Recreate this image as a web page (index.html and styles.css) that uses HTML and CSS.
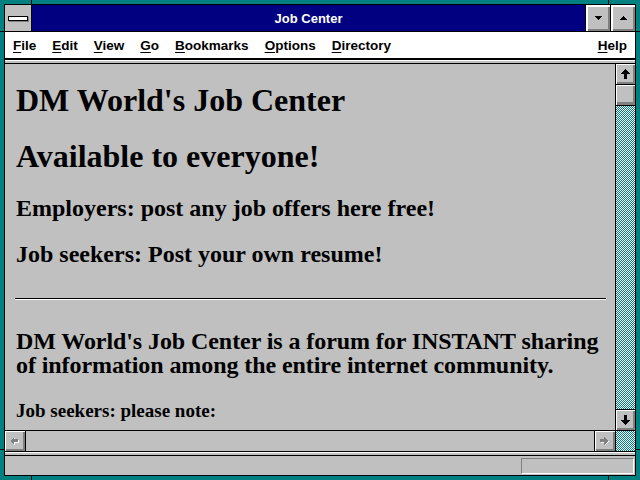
FILE: index.html
```html
<!DOCTYPE html>
<html>
<head>
<meta charset="utf-8">
<title>Job Center</title>
<link rel="stylesheet" href="styles.css">
</head>
<body>
<div class="win">
  <div class="frame">
    <div class="titlebar">
      <div class="sysbox"><div class="sysbar"></div></div>
      <div class="title">Job Center</div>
      <div class="tbtn"><svg width="7" height="4" viewBox="0 0 7 4" shape-rendering="crispEdges"><polygon points="0,0 7,0 3.5,4" fill="#000"/></svg></div>
      <div class="tbtn"><svg width="7" height="4" viewBox="0 0 7 4" shape-rendering="crispEdges"><polygon points="0,4 7,4 3.5,0" fill="#000"/></svg></div>
    </div>
    <div class="menubar">
      <span class="mi"><u>F</u>ile</span>
      <span class="mi"><u>E</u>dit</span>
      <span class="mi"><u>V</u>iew</span>
      <span class="mi"><u>G</u>o</span>
      <span class="mi"><u>B</u>ookmarks</span>
      <span class="mi"><u>O</u>ptions</span>
      <span class="mi"><u>D</u>irectory</span>
      <span class="spacer"></span>
      <span class="mi"><u>H</u>elp</span>
    </div>
    <div class="sep"></div>
    <div class="main">
      <div class="content">
        <h1 class="h1 first">DM World's Job Center</h1>
        <h1 class="h1 second">Available to everyone!</h1>
        <h2 class="h2 third">Employers: post any job offers here free!</h2>
        <h2 class="h2 fourth">Job seekers: Post your own resume!</h2>
        <div class="rule"></div>
        <p class="lead">DM World's Job Center is a forum for INSTANT sharing of information among the entire internet community.</p>
        <p class="note">Job seekers: please note:</p>
      </div>
      <div class="vscroll">
        <div class="sbtn up"><svg width="9" height="10" viewBox="0 0 9 10" shape-rendering="crispEdges"><polygon points="4.5,0 9,5 6,5 6,10 3,10 3,5 0,5" fill="#000"/></svg></div>
        <div class="thumb"></div>
        <div class="track"></div>
        <div class="sbtn down"><svg width="9" height="10" viewBox="0 0 9 10" shape-rendering="crispEdges"><polygon points="4.5,10 9,5 6,5 6,0 3,0 3,5 0,5" fill="#000"/></svg></div>
      </div>
    </div>
    <div class="hscroll">
      <div class="hbtn left"><svg width="10" height="9" viewBox="0 0 10 9" shape-rendering="crispEdges"><polygon points="1,4.5 5,0.5 5,3 9,3 9,6 5,6 5,8.5" fill="#fff"/><polygon points="0,4 4,0 4,2 8,2 8,5 4,5 4,8" fill="#808080"/></svg></div>
      <div class="htrack"></div>
      <div class="hbtn right"><svg width="10" height="9" viewBox="0 0 10 9" shape-rendering="crispEdges"><polygon points="9,4.5 5,0.5 5,3 1,3 1,6 5,6 5,8.5" fill="#fff"/><polygon points="8,4 4,0 4,2 0,2 0,5 4,5 4,8" fill="#808080"/></svg></div>
      <div class="corner"></div>
    </div>
    <div class="sep2"></div>
    <div class="status"><div class="statbox"></div></div>
  </div>
  <div class="notch nt1"></div>
  <div class="notch nt2"></div>
  <div class="notch nb1"></div>
  <div class="notch nb2"></div>
  <div class="notch nl1"></div>
  <div class="notch nl2"></div>
  <div class="notch nr1"></div>
  <div class="notch nr2"></div>
</div>
</body>
</html>
```
FILE: styles.css
```css
html, body {
  margin: 0;
  padding: 0;
  background: #008080;
  font-family: "Liberation Sans", Arial, sans-serif;
}
.win {
  position: relative;
  width: 640px;
  height: 480px;
  padding: 4px;
  box-sizing: border-box;
  background: #008080;
}
.frame {
  width: 632px;
  height: 472px;
  border: 1px solid #000;
  box-sizing: border-box;
  display: flex;
  flex-direction: column;
  background: #c0c0c0;
}
.titlebar {
  display: flex;
  height: 27px;
  flex: none;
  border-bottom: 1px solid #000;
  box-sizing: border-box;
}
.sysbox {
  width: 27px;
  border-right: 1px solid #000;
  box-sizing: border-box;
  background: #c0c0c0;
  display: flex;
  align-items: center;
  justify-content: center;
}
.sysbar {
  width: 18px;
  height: 3px;
  background: #fff;
  border: 1px solid #000;
  box-shadow: 1px 1px 0 #808080;
  margin-top: 1px;
}
.title {
  flex: 1;
  background: #000080;
  color: #fff;
  font-weight: bold;
  font-size: 13px;
  display: flex;
  align-items: center;
  justify-content: center;
}
.tbtn {
  width: 25px;
  border-left: 1px solid #000;
  box-sizing: border-box;
  background: #c0c0c0;
  box-shadow: inset 1px 1px #fff, inset 2px 2px #fff, inset -1px -1px #808080, inset -2px -2px #808080;
  display: flex;
  align-items: center;
  justify-content: center;
}
.menubar {
  height: 26px;
  flex: none;
  background: #fff;
  border-bottom: 2px solid #000;
  display: flex;
  align-items: center;
  font-weight: bold;
  font-size: 13.5px;
  color: #000;
}
.mi {
  padding: 0 8px;
}
.mi u {
  text-underline-offset: 2px;
}
.spacer {
  flex: 1;
}
.sep {
  height: 2px;
  flex: none;
  background: #c0c0c0;
  border-top: 1px solid #fff;
  border-bottom: 1px solid #000;
}
.main {
  display: flex;
  height: 366px;
  flex: none;
}
.content {
  flex: 1;
  overflow: hidden;
  padding-left: 11px;
  font-family: "Liberation Serif", "Times New Roman", serif;
  font-weight: bold;
  color: #000;
}
.h1 {
  font-size: 32px;
  line-height: 32px;
  margin: 0;
}
.first { margin-top: 20px; }
.second { margin-top: 24px; }
.h2 {
  font-size: 24px;
  line-height: 26px;
  margin: 0;
}
.third { margin-top: 23px; }
.fourth { margin-top: 20px; }
.rule {
  margin: 31px 9px 0 -1px;
  height: 1px;
  background: #000;
  border-bottom: 1px solid #fff;
}
.lead {
  font-size: 24px;
  line-height: 24px;
  letter-spacing: -0.08px;
  margin: 29px 0 0 0;
}
.note {
  font-size: 19px;
  line-height: 20px;
  margin: 24px 0 0 0;
}
.vscroll {
  width: 20px;
  border-left: 1px solid #000;
  box-sizing: border-box;
  display: flex;
  flex-direction: column;
  background: repeating-conic-gradient(#008080 0 25%, #ffffff 0 50%) 0 0 / 2px 2px;
}
.sbtn {
  height: 21px;
  flex: none;
  background: #c0c0c0;
  box-shadow: inset 1px 1px #fff, inset -1px -1px #808080, inset -2px -2px #808080;
  display: flex;
  align-items: center;
  justify-content: center;
  box-sizing: border-box;
}
.up { border-bottom: 1px solid #000; }
.down { border-top: 1px solid #000; }
.thumb {
  height: 21px;
  flex: none;
  box-sizing: border-box;
  background: #c0c0c0;
  border-bottom: 1px solid #000;
  box-shadow: inset 1px 1px #fff, inset -1px -2px #808080, inset -2px -3px #808080;
}
.track { flex: 1; }
.hscroll {
  height: 21px;
  flex: none;
  border-top: 1px solid #000;
  box-sizing: border-box;
  display: flex;
}
.hbtn {
  width: 21px;
  flex: none;
  box-sizing: border-box;
  background: #c0c0c0;
  box-shadow: inset 1px 1px #fff, inset -1px -1px #808080, inset -2px -2px #808080;
  display: flex;
  align-items: center;
  justify-content: center;
}
.left { border-right: 1px solid #000; }
.right { border-left: 1px solid #000; }
.htrack { flex: 1; background: #c0c0c0; }
.corner {
  width: 20px;
  flex: none;
  border-left: 1px solid #000;
  box-sizing: border-box;
  background: repeating-conic-gradient(#008080 0 25%, #ffffff 0 50%) 0 0 / 2px 2px;
}
.sep2 {
  height: 5px;
  flex: none;
  background: linear-gradient(#000 0 1px, #fff 1px 2px, #c0c0c0 2px 4px, #000 4px 5px);
}
.status {
  flex: 1;
  display: flex;
  align-items: center;
  justify-content: flex-end;
  background: #c0c0c0;
}
.statbox {
  width: 113px;
  height: 16px;
  box-sizing: border-box;
  border-top: 1px solid #808080;
  border-left: 1px solid #808080;
  border-bottom: 1px solid #fff;
  border-right: 1px solid #fff;
  margin-right: 1px;
}
.notch {
  position: absolute;
  background: #000;
}
.nt1, .nt2, .nb1, .nb2 { width: 1px; height: 4px; }
.nt1 { left: 31px; top: 0; }
.nt2 { left: 608px; top: 0; }
.nb1 { left: 31px; bottom: 0; }
.nb2 { left: 608px; bottom: 0; }
.nl1, .nl2, .nr1, .nr2 { width: 4px; height: 1px; }
.nl1 { left: 0; top: 31px; }
.nl2 { left: 0; top: 449px; }
.nr1 { right: 0; top: 31px; }
.nr2 { right: 0; top: 449px; }
```
